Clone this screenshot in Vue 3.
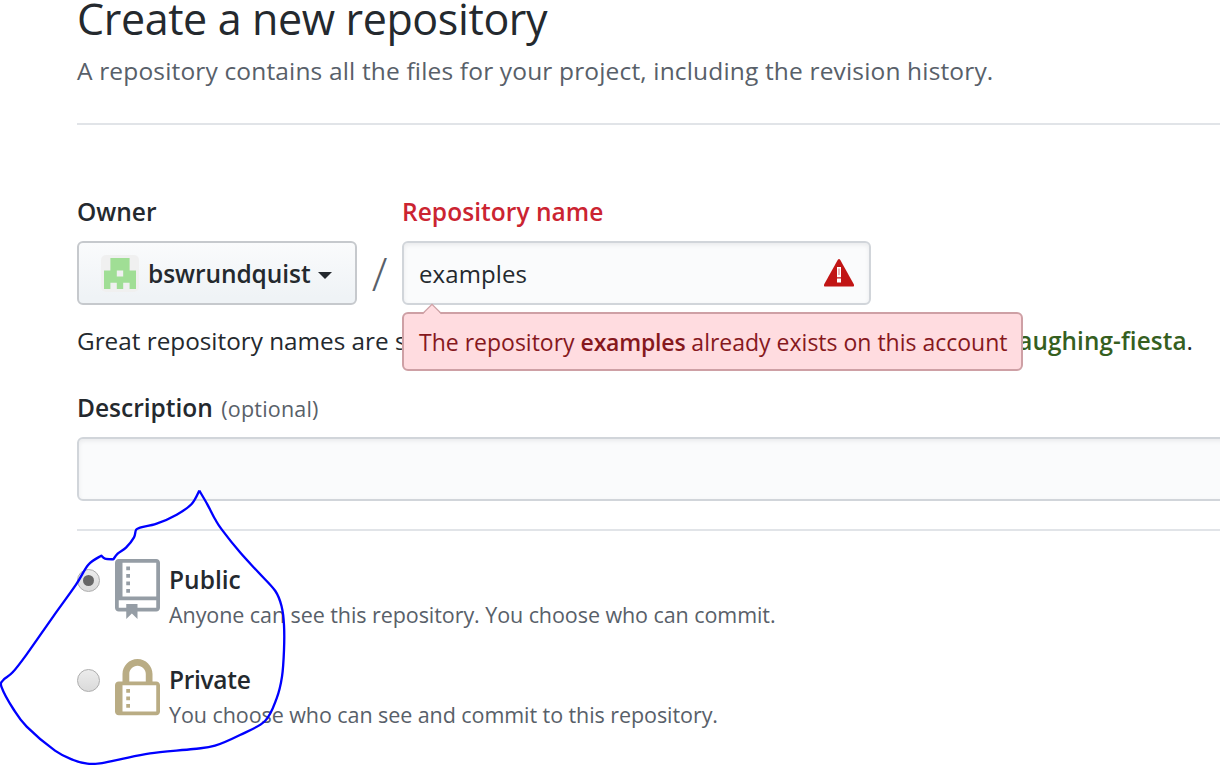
<script setup>
import { ref } from 'vue'

const owner = 'bswrundquist'
const repoName = ref('examples')
const description = ref('')
const selected = ref('public')

const options = [
  {
    id: 'public',
    title: 'Public',
    text: 'Anyone can see this repository. You choose who can commit.',
    path: 'M4 9H3V8h1v1zm0-3H3v1h1V6zm0-2H3v1h1V4zm0-2H3v1h1V2zm8-1v12c0 .55-.45 1-1 1H6v2l-1.5-1.5L3 16v-2H1c-.55 0-1-.45-1-1V1c0-.55.45-1 1-1h10c.55 0 1 .45 1 1zm-1 10H1v2h2v-1h3v1h5v-2zm0-10H2v9h9V1z',
  },
  {
    id: 'private',
    title: 'Private',
    text: 'You choose who can see and commit to this repository.',
    path: 'M4 13H3v-1h1v1zm8-6v7c0 .55-.45 1-1 1H1c-.55 0-1-.45-1-1V7c0-.55.45-1 1-1h1V4c0-2.2 1.8-4 4-4s4 1.8 4 4v2h1c.55 0 1 .45 1 1zM3.8 6h4.41V4c0-1.22-.98-2.2-2.2-2.2-1.22 0-2.2.98-2.2 2.2v2H3.8zM11 7H2v7h9V7zM4 8H3v1h1V8zm0 2H3v1h1v-1z',
  },
]

// Freehand pen stroke: each run is smoothed, corners stay sharp between runs.
const strokes = [
  [[598, 32], [622, 73], [645, 117], [665, 148], [720, 217], [775, 277], [826, 333], [845, 380], [852, 435], [852, 510], [846, 590], [830, 655], [795, 723], [720, 765], [645, 797], [580, 807], [450, 820], [360, 838], [300, 850], [262, 851], [220, 840], [165, 812], [80, 740], [40, 687], [5, 622], [9, 601], [38, 577], [80, 523], [160, 409], [228, 314], [265, 254], [304, 227]],
  [[304, 227], [315, 236], [340, 238]],
  [[340, 238], [353, 221], [378, 203], [402, 172], [408, 150], [420, 143], [470, 131], [530, 104], [575, 72], [598, 32]],
]
const smooth = (p) => {
  let d = ''
  for (let i = 0; i < p.length - 1; i++) {
    const a = p[i - 1] || p[i], b = p[i], c = p[i + 1], e = p[i + 2] || c
    d += `C${b[0] + (c[0] - a[0]) / 6} ${b[1] + (c[1] - a[1]) / 6} ${c[0] - (e[0] - b[0]) / 6} ${c[1] - (e[1] - b[1]) / 6} ${c[0]} ${c[1]}`
  }
  return d
}
const penPath = 'M598 32' + strokes.map(smooth).join('')
</script>

<template>
  <main class="page">
    <header class="head">
      <h1>Create a new repository</h1>
      <p>A repository contains all the files for your project, including the revision history.</p>
    </header>

    <section class="fields">
      <div class="field owner">
        <label class="label">Owner</label>
        <button class="owner-btn" type="button">
          <span class="avatar">
            <svg viewBox="0 0 5 5" preserveAspectRatio="none" width="32" height="31">
              <path fill="#a0de95" fill-rule="evenodd" d="M1 0h3v2h1v3H4V4H3v1H2V4H1v1H0V2h1zM2 2v1h1V2z" />
            </svg>
          </span>
          <span class="login">{{ owner }}</span>
          <span class="caret"></span>
        </button>
      </div>
      <span class="slash">/</span>
      <div class="field repo">
        <label class="label error">Repository name</label>
        <div class="repo-box">
          <input v-model="repoName" class="input" type="text" spellcheck="false" />
          <svg class="warn" viewBox="0 0 30 28" width="30" height="28">
            <path fill="#c11515" d="M13.7 1.1Q15-.9 16.3 1.1L29.4 24.5Q31 27.5 28.5 27.5H1.5Q-1 27.5.6 24.5z" />
            <path fill="#fff" d="M13 8h4v10.2h-4zM13 19.5h4v4h-4z" />
            <path fill="#dd8c8c" d="M14.4 9.6h1.2v6.5h-1.2z" />
          </svg>
          <div class="tip">
            The repository <b>{{ repoName }}</b> already exists on this account
            <svg class="tip-arrow" viewBox="0 0 20 12" width="20" height="12">
              <path fill="#ffdce0" d="M0 12L10 1.5 20 12z" />
              <path fill="none" stroke="#cea0a5" stroke-width="1.3" d="M.5 10.8L10 1.3 19.5 10.8" />
            </svg>
          </div>
        </div>
      </div>
    </section>

    <p class="hint">
      <span>Great repository names are short and memorable. Need inspiration? How about</span>
      <span><b>laughing-fiesta</b>.</span>
    </p>

    <label class="label desc-label">Description <span>(optional)</span></label>
    <input v-model="description" class="input desc" type="text" />

    <section class="options">
      <label v-for="o in options" :key="o.id" class="option">
        <input v-model="selected" class="native" type="radio" :value="o.id" />
        <span class="radio" :class="{ on: selected === o.id }"></span>
        <svg class="icon" :class="o.id" viewBox="0 0 12 16" width="45" height="60">
          <path fill-rule="evenodd" :d="o.path" />
        </svg>
        <span class="copy">
          <strong :class="o.id">{{ o.title }}</strong>
          <small>{{ o.text }}</small>
        </span>
      </label>
    </section>

    <svg class="pen" viewBox="0 0 900 855" width="300" height="285">
      <path :d="penPath" />
    </svg>
  </main>
</template>

<style>
body {
  background: #fff;
  overflow: hidden;
}
</style>

<style scoped>
.page {
  position: relative;
  box-sizing: border-box;
  width: 1220px;
  height: 765px;
  padding-left: 77px;
  overflow: hidden;
  color: #24292e;
  font: 400 24.5px/34px "Open Sans", "Noto Sans", sans-serif;
}
h1, p { margin: 0; }
b { font-weight: 600; }
.head {
  padding-bottom: 35px;
  border-bottom: 2px solid #e1e4e8;
}
h1 {
  font-size: 43px;
  font-weight: 400;
  line-height: 38px;
  letter-spacing: -0.38px;
  white-space: nowrap;
}
.head p {
  margin-top: 16px;
  color: #586069;
  letter-spacing: 0.16px;
  white-space: nowrap;
}
.fields {
  display: flex;
  align-items: flex-end;
  margin-top: 71px;
}
.field {
  display: flex;
  flex-direction: column;
  gap: 13px;
}
.label {
  display: block;
  font-weight: 600;
  font-size: 24.5px;
  line-height: 32px;
}
.label.error {
  color: #cb2431;
  letter-spacing: 0.05px;
}
.owner { width: 280px; }
.owner-btn {
  display: flex;
  align-items: center;
  box-sizing: border-box;
  width: 280px;
  height: 64px;
  padding: 0 22px;
  border: 2px solid #c6c9cd;
  border-radius: 6px;
  background: linear-gradient(#fafbfc, #eff3f6 90%);
  color: #24292e;
  font: 600 24.5px/34px "Open Sans", sans-serif;
}
.avatar {
  display: flex;
  align-items: center;
  justify-content: center;
  width: 38px;
  height: 37px;
  border-radius: 5px;
  background: #f0f0f0;
}
.login {
  margin: 2px 0 0 9px;
  letter-spacing: -0.07px;
}
.caret {
  margin: 4px 0 0 7px;
  border: 7px solid transparent;
  border-top-color: #24292e;
  border-bottom: 0;
}
.slash {
  width: 45px;
  height: 64px;
  color: #586069;
  font-size: 46px;
  font-weight: 300;
  line-height: 64px;
  text-align: center;
}
.repo-box { position: relative; }
.input {
  display: block;
  box-sizing: border-box;
  width: 469px;
  height: 64px;
  margin: 0;
  padding: 0 15px;
  border: 2px solid #d1d5da;
  border-radius: 6px;
  outline: none;
  background: #fafbfc;
  box-shadow: inset 0 2px 4px rgba(27, 31, 35, 0.075);
  color: #24292e;
  font: 400 24px/34px "Open Sans", sans-serif;
  letter-spacing: 0.1px;
}
.warn {
  position: absolute;
  top: 18px;
  right: 17px;
}
.tip {
  position: absolute;
  z-index: 2;
  top: 71px;
  left: 0;
  box-sizing: border-box;
  width: 621px;
  height: 59px;
  padding-left: 15px;
  border: 2px solid #cea0a5;
  border-radius: 6px;
  background: #ffdce0;
  color: #86181d;
  font-size: 23px;
  line-height: 57px;
  white-space: nowrap;
}
.tip b { letter-spacing: -0.2px; }
.tip-arrow {
  position: absolute;
  top: -11px;
  left: 18px;
}
.hint {
  display: flex;
  justify-content: space-between;
  width: 1116px;
  margin-top: 19px;
  font-size: 24.3px;
  white-space: nowrap;
}
.hint b {
  color: #355f1f;
  letter-spacing: 0.1px;
}
.desc-label { margin-top: 34px; }
.desc-label span {
  margin-left: 2px;
  color: #586069;
  font-size: 21.5px;
  font-weight: 500;
  letter-spacing: 0.2px;
}
.desc {
  width: 1200px;
  margin-top: 12px;
}
.options {
  display: flex;
  flex-direction: column;
  margin-top: 28px;
  padding-top: 28px;
  border-top: 2px solid #e1e4e8;
}
.option {
  display: grid;
  grid-template-columns: 23px 45px auto;
  column-gap: 15px;
  align-items: start;
  height: 100px;
}
.native {
  position: absolute;
  opacity: 0;
}
.radio {
  display: flex;
  align-items: center;
  justify-content: center;
  box-sizing: border-box;
  width: 23px;
  height: 23px;
  margin-top: 10px;
  border: 1.5px solid #adadad;
  border-radius: 50%;
  background: linear-gradient(#ececec, #dadada);
}
.radio.on::after {
  content: "";
  width: 11px;
  height: 11px;
  border-radius: 50%;
  background: #666;
}
.icon.public { fill: #959da5; }
.icon.private { fill: #b9ac84; }
.copy {
  display: flex;
  flex-direction: column;
  gap: 4px;
  margin: 5px 0 0 -6px;
}
.copy strong {
  font-weight: 600;
  line-height: 32px;
}
.copy strong.private { letter-spacing: -0.3px; }
.copy small {
  color: #586069;
  font-size: 21.5px;
  line-height: 30px;
  letter-spacing: -0.07px;
}
.pen {
  position: absolute;
  z-index: 3;
  left: 0;
  top: 480px;
}
.pen path {
  fill: none;
  stroke: #00f;
  stroke-width: 7;
  stroke-linejoin: round;
}
</style>
